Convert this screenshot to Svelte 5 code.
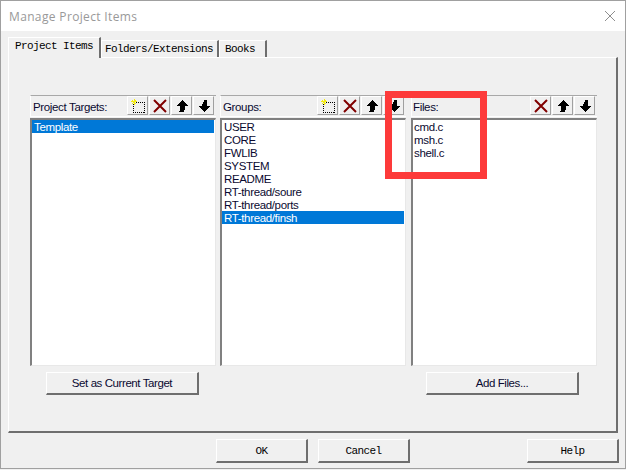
<script>
  const targets = ['Template'];
  const groups = ['USER','CORE','FWLIB','SYSTEM','README','RT-thread/soure','RT-thread/ports','RT-thread/finsh'];
  const files = ['cmd.c','msh.c','shell.c'];
  const panels = [
    { label: 'Project Targets:', items: targets, selected: 'Template', add: true },
    { label: 'Groups:', items: groups, selected: 'RT-thread/finsh', add: true },
    { label: 'Files:', items: files, selected: null, add: false }
  ];
</script>

<div class="window">
  <header class="title">
    <span>Manage Project Items</span>
    <svg class="close" width="12" height="12" viewBox="0 0 12 12"><path d="M1 1 L11 11 M11 1 L1 11" stroke="#8e8e8e" stroke-width="1" fill="none"/></svg>
  </header>
  <div class="body">
    <div class="tabs">
      <div class="tab active">Project Items</div>
      <div class="tab second">Folders/Extensions</div>
      <div class="tab third">Books</div>
    </div>
    <div class="sheet">
      <div class="columns">
        {#each panels as p}
          <section class="panel">
            <div class="head">
              <span class="label">{p.label}</span>
              <div class="tools">
                {#if p.add}
                  <button class="tool" aria-label="New">
                    <svg width="16" height="16" viewBox="0 0 16 16" shape-rendering="crispEdges">
                      <rect x="3.500" y="4.500" width="11" height="10" fill="none" stroke="#000" stroke-dasharray="1 1"/>
                      <path d="M1 3.500 H7 M4 1 V7 M2 2 L6 6 M6 2 L2 6" stroke="#f4ec10" stroke-width="1" fill="none"/>
                    </svg>
                  </button>
                {/if}
                <button class="tool" aria-label="Delete">
                  <svg width="16" height="16" viewBox="0 0 16 16"><path d="M2 2 L14 14 M14 2 L2 14" stroke="#800000" stroke-width="2" fill="none"/></svg>
                </button>
                <button class="tool" aria-label="Up">
                  <svg width="16" height="16" viewBox="0 0 16 16" shape-rendering="crispEdges"><path d="M8 2 L14 8 H11 C11 10 10.500 12 10 14 H5 C6 12 6.500 10 6 8 H2 Z" fill="#000"/></svg>
                </button>
                <button class="tool" aria-label="Down">
                  <svg width="16" height="16" viewBox="0 0 16 16" shape-rendering="crispEdges"><path d="M8 14 L14 8 H11 V2 H8 C8 4 7 6 5.500 8 H2 Z" fill="#000"/></svg>
                </button>
              </div>
            </div>
            <ul class="list">
              {#each p.items as it}
                <li class:sel={it === p.selected}>{it}</li>
              {/each}
            </ul>
          </section>
        {/each}
      </div>
      <div class="actions">
        <button class="btn wide">Set as Current Target</button>
        <button class="btn wide">Add Files...</button>
      </div>
    </div>
    <div class="footer">
      <button class="btn mono">OK</button>
      <button class="btn mono cancel">Cancel</button>
      <button class="btn mono help">Help</button>
    </div>
  </div>
  <div class="mark"></div>
</div>

<style>
  :global(body) { margin: 0; background: #f0f0f0; }
  .window {
    position: relative;
    width: 626px; height: 469px;
    box-sizing: border-box;
    border: 1px solid #a0a0a0;
    background: #f0f0f0;
    overflow: hidden;
    display: flex; flex-direction: column;
    font-family: "Liberation Sans", Arial, sans-serif;
    font-size: 11.5px;
    letter-spacing: -0.35px;
    color: #000;
  }
  .title {
    height: 30px; flex: none;
    background: #fff;
    display: flex; align-items: center; justify-content: space-between;
    padding: 0 9px 0 8px;
    font-family: "Open Sans", sans-serif;
    font-size: 12px;
    color: #999;
    letter-spacing: 0.35px;
  }
  .body { flex: 1; padding: 6px 6px 0 7px; display: flex; flex-direction: column; }
  .tabs { display: flex; height: 20px; align-items: flex-end; position: relative; z-index: 1; }
  .tab {
    box-sizing: border-box;
    height: 17px;
    background: #f0f0f0;
    border: 1px solid #fff;
    border-right: 2px solid #6e6e6e;
    border-bottom: 0;
    font-family: "Liberation Mono", monospace;
    font-size: 11px;
    letter-spacing: -0.6px;
    line-height: 16px;
    white-space: pre;
  }
  .tab.active { width: 93px; height: 21px; line-height: 17px; padding-left: 6px; margin-bottom: -1px; }
  .tab.second { width: 118px; padding-left: 3px; }
  .tab.third { width: 48px; padding-left: 5px; }
  .sheet {
    box-sizing: border-box;
    width: 610px; height: 376px;
    border: 1px solid #fff;
    border-right: 2px solid #6e6e6e;
    border-bottom: 2px solid #6e6e6e;
    padding: 37px 0 0 21px;
    display: flex; flex-direction: column;
  }
  .columns { display: flex; gap: 4px; }
  .panel { width: 186px; }
  .panel:last-child { margin-left: 1px; }
  .head {
    box-sizing: border-box;
    height: 22px;
    margin-bottom: 1px;
    border-top: 1px solid #a8a8a8;
    border-left: 1px solid #fff;
    border-bottom: 1px solid #fff;
    display: flex; align-items: flex-start; justify-content: space-between;
    padding: 0 2px 0 2px;
  }
  .panel:last-child .head { padding-left: 1px; }
  .label { color: #0a0a30; line-height: 22px; }
  .tools { display: flex; gap: 1px; }
  .tool {
    box-sizing: border-box;
    width: 21px; height: 19px;
    padding: 0; margin: 0;
    background: #f0f0f0;
    border: 1px solid;
    border-color: #fff #a0a0a0 #a0a0a0 #fff;
    display: flex; align-items: center; justify-content: center;
  }
  .list {
    list-style: none; margin: 0;
    box-sizing: border-box;
    height: 248px;
    padding: 0 1px 0 0;
    background: #fff;
    border: 2px solid #808080;
    border-right: 1px solid #e8e8e8;
    border-bottom: 1px solid #e8e8e8;
    line-height: 15px;
    color: #0a0a30;
  }
  li { height: 13px; padding-left: 2px; }
  .panel:last-child li { padding-left: 1px; }
  li.sel { background: #0078d7; color: #fff; }
  .actions { display: flex; justify-content: space-between; padding: 6px 37px 0 16px; }
  .btn {
    box-sizing: border-box;
    background: #f0f0f0;
    border: 1px solid;
    border-color: #fff #6e6e6e #6e6e6e #fff;
    border-width: 1px 2px 2px 1px;
    padding: 0; margin: 0;
    font-family: "Liberation Sans", Arial, sans-serif;
    font-size: 11.5px;
    letter-spacing: -0.42px;
    color: #0a0a30;
  }
  .wide { width: 153px; height: 23px; }
  .footer { display: flex; padding: 6px 0 0 208px; }
  .mono { font-family: "Liberation Mono", monospace; font-size: 11px; letter-spacing: -0.6px; height: 24px; width: 92px; color: #000; }
  .cancel { margin-left: 10px; }
  .help { margin-left: auto; margin-right: 0; }
  .mark {
    position: absolute; left: 384px; top: 90px;
    width: 102px; height: 88px;
    box-sizing: border-box;
    border: 7px solid #fd3a3a;
  }
</style>
